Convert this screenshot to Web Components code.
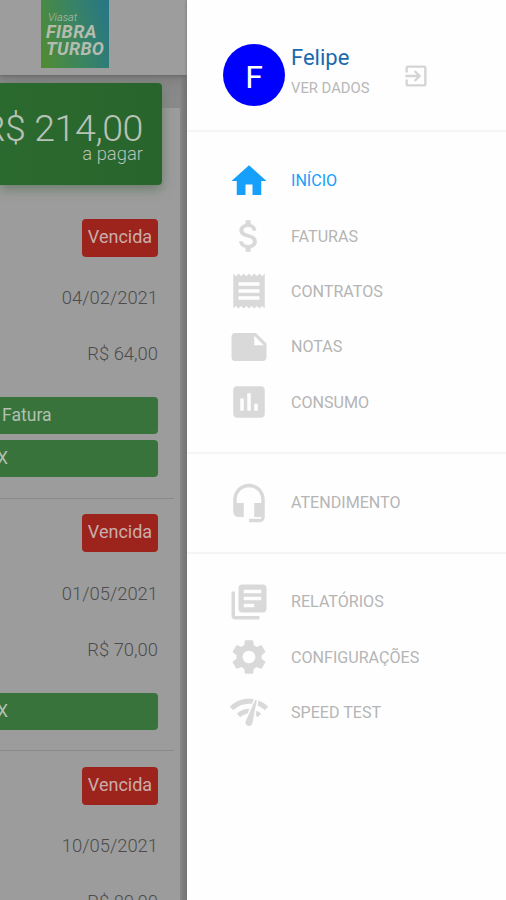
<!DOCTYPE html>
<html lang="pt-BR">
<head>
<meta charset="utf-8">
<title>Fibra Turbo</title>
<style>
html,body{margin:0;height:100%;overflow:hidden;background:#fff;font-family:Roboto,"Liberation Sans",sans-serif}
</style>
</head>
<body>
<app-shell>
  <invoice-page slot="page">
    <brand-logo slot="logo"></brand-logo>
    <total-card slot="total" label="a pagar">R$ 214,00</total-card>
    <invoice-item status="Vencida" date="04/02/2021" value="R$ 64,00"><pay-button style="--pad:2px">Fatura</pay-button><pay-button>X</pay-button></invoice-item>
    <invoice-item status="Vencida" date="01/05/2021" value="R$ 70,00"><pay-button>X</pay-button></invoice-item>
    <invoice-item status="Vencida" date="10/05/2021" value="R$ 80,00"></invoice-item>
  </invoice-page>
  <side-drawer slot="drawer">
    <user-header name="Felipe" initial="F">VER DADOS</user-header>
    <menu-group style="height:322px;--top:21px">
      <menu-item icon="home" active>INÍCIO</menu-item>
      <menu-item icon="money">FATURAS</menu-item>
      <menu-item icon="receipt">CONTRATOS</menu-item>
      <menu-item icon="note">NOTAS</menu-item>
      <menu-item icon="chart">CONSUMO</menu-item>
    </menu-group>
    <menu-group style="height:100px;--top:21px">
      <menu-item icon="headset">ATENDIMENTO</menu-item>
    </menu-group>
    <menu-group style="height:340px;--top:20px">
      <menu-item icon="library">RELATÓRIOS</menu-item>
      <menu-item icon="gear">CONFIGURAÇÕES</menu-item>
      <menu-item icon="speed">SPEED TEST</menu-item>
    </menu-group>
  </side-drawer>
</app-shell>
<script>
const define = (name, render) => customElements.define(name, class extends HTMLElement {
  constructor() {
    super();
    this.attachShadow({ mode: 'open' });
  }
  connectedCallback() {
    this.shadowRoot.innerHTML = render(this);
  }
});
const attr = (el, n) => el.getAttribute(n) || '';

const icons = {
  exit: '<path d="M10.09 15.59L11.5 17l5-5-5-5-1.41 1.41L12.67 11H3v2h9.67l-2.58 2.59zM19 3H5c-1.11 0-2 .9-2 2v4h2V5h14v14H5v-4H3v4c0 1.1.89 2 2 2h14c1.1 0 2-.9 2-2V5c0-1.1-.9-2-2-2z"/>',
  home: '<path d="M10 20v-6h4v6h5v-8h3L12 3 2 12h3v8z"/>',
  money: '<path d="M11.8 10.9c-2.27-.59-3-1.2-3-2.15 0-1.09 1.01-1.85 2.7-1.85 1.78 0 2.44.85 2.5 2.1h2.21c-.07-1.72-1.12-3.3-3.21-3.81V3h-3v2.16c-1.94.42-3.5 1.68-3.5 3.61 0 2.31 1.91 3.46 4.7 4.13 2.5.6 3 1.48 3 2.41 0 .69-.49 1.79-2.7 1.79-2.06 0-2.87-.92-2.98-2.1h-2.2c.12 2.19 1.76 3.42 3.68 3.83V21h3v-2.15c1.95-.37 3.5-1.5 3.5-3.55 0-2.84-2.43-3.81-4.7-4.4z"/>',
  receipt: '<path d="M18 17H6v-2h12v2zm0-4H6v-2h12v2zm0-4H6V7h12v2zM3 22l1.5-1.5L6 22l1.5-1.5L9 22l1.5-1.5L12 22l1.5-1.5L15 22l1.5-1.5L18 22l1.5-1.5L21 22V2l-1.5 1.5L18 2l-1.5 1.5L15 2l-1.5 1.5L12 2l-1.5 1.5L9 2 7.5 3.5 6 2 4.5 3.5 3 2v20z"/>',
  note: '<path d="M22 10l-6-6H4c-1.1 0-2 .9-2 2v12.01c0 1.1.9 1.99 2 1.99h16c1.1 0 2-.9 2-2v-8zm-7-4.5l5.5 5.5H15V5.5z"/>',
  chart: '<path d="M19 3H5c-1.1 0-2 .9-2 2v14c0 1.1.9 2 2 2h14c1.1 0 2-.9 2-2V5c0-1.1-.9-2-2-2zM9 17H7v-7h2v7zm4 0h-2V7h2v10zm4 0h-2v-4h2v4z"/>',
  headset: '<path d="M12 1c-4.97 0-9 4.03-9 9v7c0 1.66 1.34 3 3 3h3v-8H5v-2c0-3.87 3.13-7 7-7s7 3.13 7 7v2h-4v8h4v1h-7v2h6c1.66 0 3-1.34 3-3V10c0-4.97-4.03-9-9-9z"/>',
  library: '<path d="M4 6H2v14c0 1.1.9 2 2 2h14v-2H4V6zm16-4H8c-1.1 0-2 .9-2 2v12c0 1.1.9 2 2 2h12c1.1 0 2-.9 2-2V4c0-1.1-.9-2-2-2zm-1 9H9V9h10v2zm-4 4H9v-2h6v2zm4-8H9V5h10v2z"/>',
  gear: '<path d="M19.14 12.94c.04-.3.06-.61.06-.94 0-.32-.02-.64-.07-.94l2.03-1.58c.18-.14.23-.41.12-.61l-1.92-3.32c-.12-.22-.37-.29-.59-.22l-2.39.96c-.5-.38-1.03-.7-1.62-.94l-.36-2.54c-.04-.24-.24-.41-.48-.41h-3.84c-.24 0-.43.17-.47.41l-.36 2.54c-.59.24-1.13.57-1.62.94l-2.39-.96c-.22-.08-.47 0-.59.22L2.74 8.87c-.12.21-.08.47.12.61l2.03 1.58c-.05.3-.09.63-.09.94s.02.64.07.94l-2.03 1.58c-.18.14-.23.41-.12.61l1.92 3.32c.12.22.37.29.59.22l2.39-.96c.5.38 1.03.7 1.62.94l.36 2.54c.05.24.24.41.48.41h3.84c.24 0 .44-.17.47-.41l.36-2.54c.59-.24 1.13-.56 1.62-.94l2.39.96c.22.08.47 0 .59-.22l1.92-3.32c.12-.22.07-.47-.12-.61l-2.01-1.58zM12 15.6c-1.98 0-3.6-1.62-3.6-3.6s1.62-3.6 3.6-3.6 3.6 1.62 3.6 3.6-1.62 3.6-3.6 3.6z"/>',
  speed: '<path d="M15.9 5c-.17 0-.32.09-.41.23l-.07.15-5.18 11.65c-.16.29-.26.61-.26.96 0 1.11.9 2.01 2.01 2.01.96 0 1.77-.68 1.96-1.59l.01-.03L16.4 5.5c0-.28-.22-.5-.5-.5zM1 9l2 2c2.88-2.88 6.79-4.08 10.53-3.62l1.19-2.68C9.89 3.84 4.74 5.27 1 9zm20 2l2-2c-1.64-1.64-3.55-2.82-5.59-3.57l-.53 2.82c1.5.62 2.9 1.53 4.12 2.75zm-4 4l2-2c-.8-.8-1.7-1.42-2.66-1.89l-.55 2.92c.42.27.83.59 1.21.97zM5 13l2 2c1.13-1.13 2.56-1.79 4.03-2l1.28-2.88c-2.63-.08-5.3.87-7.31 2.88z"/>'
};
const svg = n => `<svg viewBox="0 0 24 24" aria-hidden="true">${icons[n]}</svg>`;

define('app-shell', () => `<style>
:host{display:grid;grid-template-columns:187px 319px;height:900px;width:506px;overflow:hidden}
</style><slot name="page"></slot><slot name="drawer"></slot>`);

define('invoice-page', () => `<style>
:host{display:flex;flex-direction:column;width:187px;height:900px;overflow:hidden;background:linear-gradient(90deg,#898989 180px,#7c7c7c 183px,#787878 187px)}
header{flex:none;height:75px;background:#9d9d9d;box-shadow:0 1px 3px #666,0 3px 12px #777;padding-left:41px;position:relative}
.total{flex:none;height:102px;margin-top:8px;position:relative}
main{flex:none;width:180px;height:792px;margin-top:-77px;padding-top:95px;box-sizing:border-box;background:#9c9c9c}
</style><header><slot name="logo"></slot></header><div class="total"><slot name="total"></slot></div><main><slot></slot></main>`);

define('brand-logo', () => `<style>
:host{display:flex;flex-direction:column;box-sizing:border-box;width:68px;height:68px;padding:11px 0 0 5px;background:linear-gradient(75deg,#4f8b35 5%,#3b8560 50%,#287784 95%);color:#b5bcae;white-space:nowrap}
small{font:italic 300 11px/13px Roboto,sans-serif;padding-left:2px}
b{font:italic 700 18px/16.5px Roboto,sans-serif;letter-spacing:.45px}
b+b{letter-spacing:.3px}
</style><small>Viasat</small><b>FIBRA</b><b>TURBO</b>`);

define('total-card', el => `<style>
:host{display:flex;flex-direction:column;align-items:flex-end;box-sizing:border-box;width:162px;height:102px;padding:25px 19px 0 0;border-radius:0 4px 4px 0;background:linear-gradient(90deg,#2b6a2f,#28652c);box-shadow:0 4px 12px #6b7c6b;color:#b9c2b8;white-space:nowrap;font-weight:300}
.sum{font-size:37.5px;line-height:40px;letter-spacing:-.4px}
.lab{font-size:18.4px;line-height:20px;margin-top:-4px}
</style><span class="sum"><slot></slot></span><span class="lab">${attr(el, 'label')}</span>`);

define('invoice-item', el => `<style>
:host{display:flex;flex-direction:column;align-items:flex-end;box-sizing:border-box;width:174px;padding:15.5px 16px 20.5px 0;border-bottom:1px solid #898989;color:#4c4c4c;font-size:18.4px}
.badge{width:76px;height:38px;border-radius:4px;background:#9d241c;color:#c9adab;font-size:18px;line-height:35.5px;text-align:center;margin-bottom:13.5px}
.row{height:56px;line-height:56px;font-weight:300;white-space:nowrap}
.acts{display:flex;flex-direction:column;gap:6px;width:158px;padding-top:15px}
</style><div class="badge">${attr(el, 'status')}</div><div class="row">${attr(el, 'date')}</div><div class="row">${attr(el, 'value')}</div><div class="acts"><slot></slot></div>`);

define('pay-button', () => `<style>
:host{display:block;height:37px;box-sizing:border-box;border-radius:0 4px 4px 0;background:#38733c;color:#b2c0b0;font-size:17.6px;line-height:37px;overflow:hidden}
span{display:block;margin-left:var(--pad,-3px)}
</style><span><slot></slot></span>`);

define('side-drawer', () => `<style>
:host{display:flex;flex-direction:column;background:#fefefe;height:900px;position:relative;box-shadow:0 0 3px #6d6d6d}
</style><slot></slot>`);

define('user-header', el => `<style>
:host{display:flex;box-sizing:border-box;flex:none;height:130px;padding:44px 0 0 36px}
.av{width:62px;height:62px;border-radius:50%;background:#00f;color:#fff;font:400 32px/67px Roboto,sans-serif;text-align:center}
.info{display:flex;flex-direction:column;width:105px;padding:1px 0 0 6px;white-space:nowrap}
.name{color:#1b69ae;font-size:22px;line-height:26px}
.sub{color:#b8b8b8;font-size:14.8px;line-height:20px;margin-top:7px}
svg{width:28px;height:28px;margin:18px 0 0 6px;fill:#d4d4d4}
</style><div class="av">${attr(el, 'initial')}</div><div class="info"><span class="name">${attr(el, 'name')}</span><span class="sub"><slot></slot></span></div>${svg('exit')}`);

define('menu-group', () => `<style>
:host{display:block;flex:none;box-sizing:border-box;border-top:2px solid #f5f5f5;padding-top:var(--top)}
</style><slot></slot>`);

define('menu-item', el => `<style>
:host{display:flex;align-items:center;height:55.4px;color:#b5b5b5;fill:#d9d9d9;font-size:16.1px;white-space:nowrap}
:host([active]){color:#179ffc;fill:#179ffc}
svg{width:42px;height:42px;margin:0 21px 0 41px}
</style>${svg(attr(el, 'icon'))}<span><slot></slot></span>`);
</script>
</body>
</html>
